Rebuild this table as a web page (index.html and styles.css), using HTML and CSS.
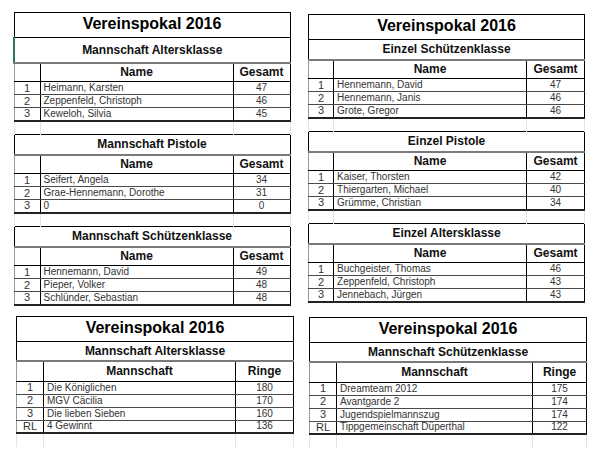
FILE: index.html
```html
<!DOCTYPE html>
<html lang="de">
<head>
<meta charset="utf-8">
<title>Vereinspokal 2016</title>
<link rel="stylesheet" href="styles.css">
</head>
<body>
<div class="page">
  <div class="col col-left">
    <table class="sheet w-lt">
      <colgroup><col class="c1"><col class="c2"><col class="c3"></colgroup>
      <tr class="t"><td colspan="3">Vereinspokal 2016</td></tr>
      <tr class="s tall"><td colspan="3" class="sel">Mannschaft Altersklasse</td></tr>
      <tr class="h"><td></td><td>Name</td><td>Gesamt</td></tr>
      <tr class="r"><td>1</td><td>Heimann, Karsten</td><td>47</td></tr>
      <tr class="r"><td>2</td><td>Zeppenfeld, Christoph</td><td>46</td></tr>
      <tr class="r last"><td>3</td><td>Keweloh, Silvia</td><td>45</td></tr>
      <tr class="gap"><td></td><td></td><td></td></tr>
      <tr class="s"><td colspan="3">Mannschaft Pistole</td></tr>
      <tr class="h"><td></td><td>Name</td><td>Gesamt</td></tr>
      <tr class="r"><td>1</td><td>Seifert, Angela</td><td>34</td></tr>
      <tr class="r"><td>2</td><td>Grae-Hennemann, Dorothe</td><td>31</td></tr>
      <tr class="r last"><td>3</td><td>0</td><td>0</td></tr>
      <tr class="gap"><td></td><td></td><td></td></tr>
      <tr class="s"><td colspan="3">Mannschaft Schützenklasse</td></tr>
      <tr class="h"><td></td><td>Name</td><td>Gesamt</td></tr>
      <tr class="r"><td>1</td><td>Hennemann, David</td><td>49</td></tr>
      <tr class="r"><td>2</td><td>Pieper, Volker</td><td>48</td></tr>
      <tr class="r last"><td>3</td><td>Schlünder, Sebastian</td><td>48</td></tr>
    </table>

    <table class="sheet team w-lb">
      <colgroup><col class="c1"><col class="c2"><col class="c3"></colgroup>
      <tr class="t"><td colspan="3">Vereinspokal 2016</td></tr>
      <tr class="s"><td colspan="3">Mannschaft Altersklasse</td></tr>
      <tr class="h"><td></td><td>Mannschaft</td><td>Ringe</td></tr>
      <tr class="r"><td>1</td><td>Die Königlichen</td><td>180</td></tr>
      <tr class="r"><td>2</td><td>MGV Cäcilia</td><td>170</td></tr>
      <tr class="r"><td>3</td><td>Die lieben Sieben</td><td>160</td></tr>
      <tr class="r last"><td>RL</td><td>4 Gewinnt</td><td>136</td></tr>
      <tr class="gap"><td></td><td></td><td></td></tr>
    </table>
  </div>

  <div class="col col-right">
    <table class="sheet w-rt">
      <colgroup><col class="c1"><col class="c2"><col class="c3"></colgroup>
      <tr class="t"><td colspan="3">Vereinspokal 2016</td></tr>
      <tr class="s"><td colspan="3">Einzel Schützenklasse</td></tr>
      <tr class="h"><td></td><td>Name</td><td>Gesamt</td></tr>
      <tr class="r"><td>1</td><td>Hennemann, David</td><td>47</td></tr>
      <tr class="r"><td>2</td><td>Hennemann, Janis</td><td>46</td></tr>
      <tr class="r last"><td>3</td><td>Grote, Gregor</td><td>46</td></tr>
      <tr class="gap"><td></td><td></td><td></td></tr>
      <tr class="s"><td colspan="3">Einzel Pistole</td></tr>
      <tr class="h"><td></td><td>Name</td><td>Gesamt</td></tr>
      <tr class="r"><td>1</td><td>Kaiser, Thorsten</td><td>42</td></tr>
      <tr class="r"><td>2</td><td>Thiergarten, Michael</td><td>40</td></tr>
      <tr class="r last"><td>3</td><td>Grümme, Christian</td><td>34</td></tr>
      <tr class="gap"><td></td><td></td><td></td></tr>
      <tr class="s"><td colspan="3">Einzel Altersklasse</td></tr>
      <tr class="h"><td></td><td>Name</td><td>Gesamt</td></tr>
      <tr class="r"><td>1</td><td>Buchgeister, Thomas</td><td>46</td></tr>
      <tr class="r"><td>2</td><td>Zeppenfeld, Christoph</td><td>43</td></tr>
      <tr class="r last"><td>3</td><td>Jennebach, Jürgen</td><td>43</td></tr>
    </table>

    <table class="sheet team w-rb">
      <colgroup><col class="c1"><col class="c2"><col class="c3"></colgroup>
      <tr class="t"><td colspan="3">Vereinspokal 2016</td></tr>
      <tr class="s"><td colspan="3">Mannschaft Schützenklasse</td></tr>
      <tr class="h"><td></td><td>Mannschaft</td><td>Ringe</td></tr>
      <tr class="r"><td>1</td><td>Dreamteam 2012</td><td>175</td></tr>
      <tr class="r"><td>2</td><td>Avantgarde 2</td><td>174</td></tr>
      <tr class="r"><td>3</td><td>Jugendspielmannszug</td><td>174</td></tr>
      <tr class="r last"><td>RL</td><td>Tippgemeinschaft Düperthal</td><td>122</td></tr>
      <tr class="gap"><td></td><td></td><td></td></tr>
    </table>
  </div>
</div>
</body>
</html>
```

FILE: styles.css
```css
* { box-sizing: border-box; }

html, body {
  margin: 0;
  padding: 0;
  background: #ffffff;
}

body {
  width: 600px;
  height: 449px;
  overflow: hidden;
  font-family: "Liberation Sans", Arial, sans-serif;
}

.page {
  display: flex;
  align-items: flex-start;
}

.col {
  display: flex;
  flex-direction: column;
}

.col-left {
  margin-left: 13px;
  padding-top: 12px;
}

.col-right {
  margin-left: 14px;
  padding-top: 14px;
}

.sheet {
  border-collapse: collapse;
  table-layout: fixed;
}

.sheet td {
  padding: 0;
  line-height: 1;
  white-space: nowrap;
  overflow: hidden;
}

/* table widths and column widths */
.w-lt { width: 276px; }
.w-lt .c1 { width: 26px; }
.w-lt .c2 { width: 193px; }
.w-lt .c3 { width: 57px; }

.w-rt { width: 276px; }
.w-rt .c1 { width: 25px; }
.w-rt .c2 { width: 193px; }
.w-rt .c3 { width: 58px; }

.w-lb { width: 277px; margin-top: 10px; margin-left: 3px; }
.w-lb .c1 { width: 27px; }
.w-lb .c2 { width: 192px; }
.w-lb .c3 { width: 58px; }

.w-rb { width: 277px; margin-top: 14px; margin-left: 1px; }
.w-rb .c1 { width: 27px; }
.w-rb .c2 { width: 196px; }
.w-rb .c3 { width: 54px; }

/* title row */
.t { height: 25px; }
.t td {
  font-family: "Comic Sans MS", "Liberation Sans", Arial, sans-serif;
  font-weight: bold;
  font-size: 16px;
  color: #000;
  text-align: center;
  vertical-align: middle;
  border: 1px solid #000;
  padding-bottom: 2px;
}

/* section subtitle row */
.s { height: 20px; }
.s.tall { height: 25px; }
.s td {
  font-family: "Comic Sans MS", "Liberation Sans", Arial, sans-serif;
  font-weight: bold;
  font-size: 12px;
  color: #111;
  text-align: center;
  vertical-align: middle;
  border-top: 1px solid #000;
  border-left: 1px solid #000;
  border-right: 1px solid #000;
  border-bottom: 2px solid #7a7a7a;
}

.s td.sel {
  border-left: 2px solid #2d7a52;
}

/* column header row */
.h { height: 19px; }
.team .h { height: 20px; }
.h td {
  font-family: "Comic Sans MS", "Liberation Sans", Arial, sans-serif;
  font-weight: bold;
  font-size: 12px;
  color: #111;
  text-align: center;
  vertical-align: middle;
  border: 1px solid #000;
}
.h td:first-child { border-left-color: #9a9a9a; }

/* data rows */
.r { height: 13px; }
.r td {
  font-family: "Liberation Sans", Arial, sans-serif;
  font-size: 10px;
  color: #333;
  vertical-align: middle;
  text-align: center;
  border-left: 1px solid #000;
  border-right: 1px solid #000;
  border-bottom: 1px solid #4a4a4a;
}
.r td:first-child {
  border-left-color: #9a9a9a;
  font-size: 11px;
}
.r td:nth-child(2) {
  text-align: left;
  padding-left: 3px;
}
.r.last td { border-bottom: 2px solid #222; }

/* empty spreadsheet row between blocks */
.gap { height: 14px; }
.gap td {
  border-left: 1px solid #e4e4e4;
  border-right: 1px solid #e4e4e4;
}
```
